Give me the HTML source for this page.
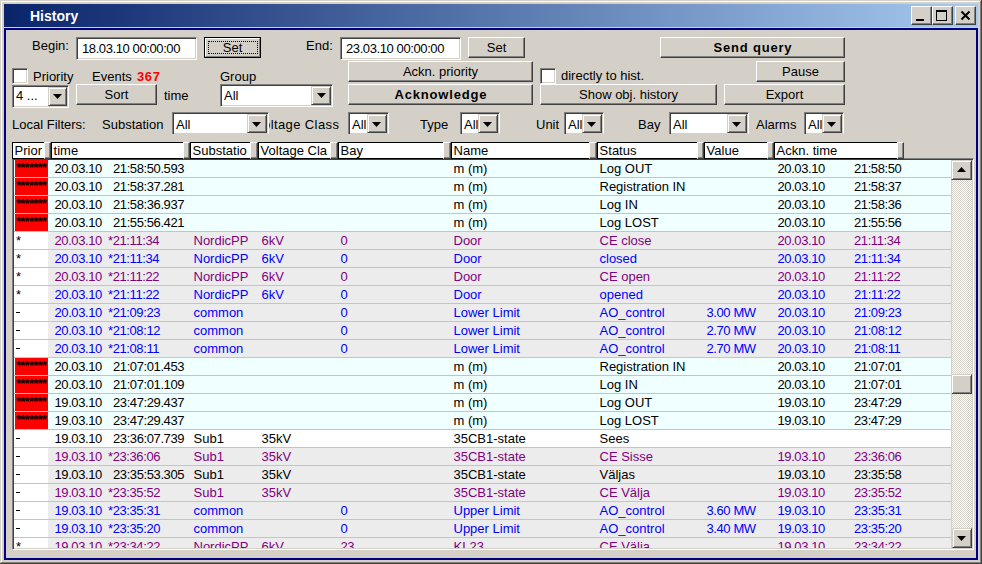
<!DOCTYPE html><html><head><meta charset="utf-8"><style>
*{margin:0;padding:0;box-sizing:border-box}
html,body{width:982px;height:564px;overflow:hidden;background:#d4d0c8;font-family:"Liberation Sans",sans-serif;font-size:13px;color:#000}
.a{position:absolute}
.t{position:absolute;white-space:nowrap;line-height:13px;font-size:13px}
.btn{position:absolute;background:#d4d0c8;border:1px solid;border-color:#fff #404040 #404040 #fff;box-shadow:inset -1px -1px #808080}
.btn2{position:absolute;background:#d4d0c8;border:1px solid;border-color:#d4d0c8 #404040 #404040 #d4d0c8;box-shadow:inset 1px 1px #fff,inset -1px -1px #808080}
.edit{position:absolute;background:#fff;border:1px solid;border-color:#808080 #fff #fff #808080;box-shadow:inset 1px 1px #404040,inset -1px -1px #d4d0c8}
.n{letter-spacing:-0.4px}
</style></head><body><div class="a" style="left:0px;top:0px;width:982px;height:564px;background:#d4d0c8"></div>
<div class="a" style="left:1px;top:1px;width:980px;height:1px;background:#fff"></div>
<div class="a" style="left:1px;top:1px;width:1px;height:562px;background:#fff"></div>
<div class="a" style="left:980px;top:1px;width:1px;height:562px;background:#808080"></div>
<div class="a" style="left:1px;top:562px;width:980px;height:1px;background:#808080"></div>
<div class="a" style="left:981px;top:0px;width:1px;height:564px;background:#404040"></div>
<div class="a" style="left:0px;top:563px;width:982px;height:1px;background:#404040"></div>
<div class="a" style="left:4px;top:4px;width:974px;height:23px;background:linear-gradient(to right,#0a246a,#a6caf0)"></div>
<span class="t" style="left:30px;top:10px;font-weight:bold;font-size:14px;color:#fff">History</span>
<div class="btn2" style="left:911px;top:6px;width:21px;height:19px;border-color:#fff #404040 #404040 #fff;box-shadow:inset -1px -1px #808080"></div>
<div class="btn2" style="left:932px;top:6px;width:21px;height:19px;border-color:#fff #404040 #404040 #fff;box-shadow:inset -1px -1px #808080"></div>
<div class="btn2" style="left:955px;top:6px;width:21px;height:19px;border-color:#fff #404040 #404040 #fff;box-shadow:inset -1px -1px #808080"></div>
<div class="a" style="left:916px;top:19px;width:8px;height:2px;background:#000"></div>
<div class="a" style="left:936px;top:10px;width:11px;height:11px;border:1px solid #000;border-top-width:2px"></div>
<svg class="a" style="left:960px;top:10px" width="12" height="11" viewBox="0 0 12 11"><path d="M1.5 1.5 L9.5 9.5 M9.5 1.5 L1.5 9.5" stroke="#000" stroke-width="2" fill="none"/></svg>
<div class="a" style="left:4px;top:28px;width:974px;height:532px;border:2px solid #000080;background:#d4d0c8"></div>
<span class="t" style="left:32px;top:39px;">Begin:</span>
<div class="edit" style="left:76px;top:37px;width:121px;height:23px;"></div>
<span class="t" style="left:82px;top:42px;letter-spacing:-0.4px">18.03.10 00:00:00</span>
<div class="a" style="left:204px;top:37px;width:57px;height:21px;border:1px solid #000"></div>
<div class="btn" style="left:205px;top:38px;width:55px;height:19px;border-color:#fff #808080 #808080 #fff;box-shadow:none"></div>
<div class="a" style="left:208px;top:41px;width:50px;height:13px;border:1px dotted #000"></div>
<span class="t" style="left:205px;width:55px;text-align:center;top:41px;">Set</span>
<span class="t" style="left:306px;top:39px;">End:</span>
<div class="edit" style="left:340px;top:37px;width:121px;height:23px;"></div>
<span class="t" style="left:346px;top:42px;letter-spacing:-0.4px">23.03.10 00:00:00</span>
<div class="btn" style="left:468px;top:37px;width:57px;height:21px;"></div>
<span class="t" style="left:468px;width:57px;text-align:center;top:41px;">Set</span>
<div class="btn" style="left:660px;top:37px;width:185px;height:21px;"></div>
<span class="t" style="left:660px;width:185px;text-align:center;top:41px;font-weight:bold;letter-spacing:0.8px;text-indent:0.8px">Send query</span>
<div class="edit" style="left:12px;top:68px;width:16px;height:16px;"></div>
<span class="t" style="left:33px;top:70px;">Priority</span>
<span class="t" style="left:92px;top:70px;">Events</span>
<span class="t" style="left:137px;top:70px;font-weight:bold;color:#ff0000;letter-spacing:0.6px">367</span>
<span class="t" style="left:220px;top:70px;">Group</span>
<div class="btn" style="left:348px;top:61px;width:185px;height:21px;"></div>
<span class="t" style="left:348px;width:185px;text-align:center;top:65px;">Ackn. priority</span>
<div class="edit" style="left:540px;top:68px;width:16px;height:16px;"></div>
<span class="t" style="left:561px;top:69px;">directly to hist.</span>
<div class="btn" style="left:756px;top:61px;width:89px;height:21px;"></div>
<span class="t" style="left:756px;width:89px;text-align:center;top:65px;">Pause</span>
<div class="edit" style="left:12px;top:85px;width:57px;height:23px;"></div>
<div class="btn2" style="left:48px;top:87px;width:19px;height:19px;"></div>
<svg class="a" style="left:53.0px;top:94px" width="9" height="5" viewBox="0 0 9 5"><polygon points="0,0 9,0 4.5,5" fill="#000"/></svg>
<span class="t" style="left:16px;top:89px;">4 ...</span>
<div class="btn" style="left:76px;top:84px;width:81px;height:21px;"></div>
<span class="t" style="left:76px;width:81px;text-align:center;top:88px;">Sort</span>
<span class="t" style="left:164px;top:89px;">time</span>
<div class="edit" style="left:220px;top:84px;width:113px;height:23px;"></div>
<div class="btn2" style="left:311px;top:86px;width:20px;height:19px;"></div>
<svg class="a" style="left:316.5px;top:93px" width="9" height="5" viewBox="0 0 9 5"><polygon points="0,0 9,0 4.5,5" fill="#000"/></svg>
<span class="t" style="left:224px;top:89px;">All</span>
<div class="btn" style="left:348px;top:84px;width:185px;height:21px;"></div>
<span class="t" style="left:348px;width:185px;text-align:center;top:88px;font-weight:bold;letter-spacing:0.8px;text-indent:0.8px">Acknowledge</span>
<div class="btn" style="left:540px;top:84px;width:177px;height:21px;"></div>
<span class="t" style="left:540px;width:177px;text-align:center;top:88px;">Show obj. history</span>
<div class="btn" style="left:724px;top:84px;width:121px;height:21px;"></div>
<span class="t" style="left:724px;width:121px;text-align:center;top:88px;">Export</span>
<span class="t" style="left:12px;top:118px;">Local Filters:</span>
<span class="t" style="left:102px;top:118px;">Substation</span>
<span class="t" style="left:263px;top:118px;letter-spacing:0.4px">oltage Class</span>
<div class="a" style="left:172px;top:112px;width:97px;height:22px;overflow:hidden">
<div class="edit" style="left:0;top:0;width:97px;height:23px"></div>
<div class="btn2" style="left:75px;top:2px;width:20px;height:19px"></div>
<svg class="a" style="left:80px;top:10px" width="9" height="5" viewBox="0 0 9 5"><polygon points="0,0 9,0 4.5,5" fill="#000"/></svg>
<span class="t" style="left:4px;top:6px">All</span>
</div>
<div class="a" style="left:348px;top:112px;width:41px;height:22px;overflow:hidden">
<div class="edit" style="left:0;top:0;width:41px;height:23px"></div>
<div class="btn2" style="left:19px;top:2px;width:20px;height:19px"></div>
<svg class="a" style="left:24px;top:10px" width="9" height="5" viewBox="0 0 9 5"><polygon points="0,0 9,0 4.5,5" fill="#000"/></svg>
<span class="t" style="left:4px;top:6px">All</span>
</div>
<span class="t" style="left:420px;top:118px;">Type</span>
<div class="a" style="left:460px;top:112px;width:40px;height:22px;overflow:hidden">
<div class="edit" style="left:0;top:0;width:40px;height:23px"></div>
<div class="btn2" style="left:18px;top:2px;width:20px;height:19px"></div>
<svg class="a" style="left:23px;top:10px" width="9" height="5" viewBox="0 0 9 5"><polygon points="0,0 9,0 4.5,5" fill="#000"/></svg>
<span class="t" style="left:4px;top:6px">All</span>
</div>
<span class="t" style="left:536px;top:118px;">Unit</span>
<div class="a" style="left:564px;top:112px;width:40px;height:22px;overflow:hidden">
<div class="edit" style="left:0;top:0;width:40px;height:23px"></div>
<div class="btn2" style="left:18px;top:2px;width:20px;height:19px"></div>
<svg class="a" style="left:23px;top:10px" width="9" height="5" viewBox="0 0 9 5"><polygon points="0,0 9,0 4.5,5" fill="#000"/></svg>
<span class="t" style="left:4px;top:6px">All</span>
</div>
<span class="t" style="left:638px;top:118px;">Bay</span>
<div class="a" style="left:669px;top:112px;width:80px;height:22px;overflow:hidden">
<div class="edit" style="left:0;top:0;width:80px;height:23px"></div>
<div class="btn2" style="left:58px;top:2px;width:20px;height:19px"></div>
<svg class="a" style="left:63px;top:10px" width="9" height="5" viewBox="0 0 9 5"><polygon points="0,0 9,0 4.5,5" fill="#000"/></svg>
<span class="t" style="left:4px;top:6px">All</span>
</div>
<span class="t" style="left:756px;top:118px;">Alarms</span>
<div class="a" style="left:804px;top:112px;width:40px;height:22px;overflow:hidden">
<div class="edit" style="left:0;top:0;width:40px;height:23px"></div>
<div class="btn2" style="left:18px;top:2px;width:20px;height:19px"></div>
<svg class="a" style="left:23px;top:10px" width="9" height="5" viewBox="0 0 9 5"><polygon points="0,0 9,0 4.5,5" fill="#000"/></svg>
<span class="t" style="left:4px;top:6px">All</span>
</div>
<div class="edit" style="left:12px;top:158px;width:962px;height:392px;"></div>
<div class="a" style="left:14px;top:160px;width:937px;height:388px;overflow:hidden">
<div class="a" style="left:0;top:0px;width:937px;height:18px;background:#f0ffff;border-bottom:1px solid #c4c4c4;color:#000">
<div class="a" style="left:1px;top:0;width:33px;height:17px;background:#f00"></div>
<span class="t" style="left:2px;top:1px;color:#000;letter-spacing:-0.75px;font-weight:bold">*******</span>
<span class="t" style="left:40.5px;top:2px;letter-spacing:-0.4px;">20.03.10</span>
<span class="t" style="left:99px;top:2px;letter-spacing:-0.4px;">21:58:50.593</span>
<span class="t" style="left:439.5px;top:2px;">m (m)</span>
<span class="t" style="left:585.5px;top:2px;">Log OUT</span>
<span class="t" style="left:763.5px;top:2px;letter-spacing:-0.4px;">20.03.10</span>
<span class="t" style="left:840px;top:2px;letter-spacing:-0.4px;">21:58:50</span>
</div>
<div class="a" style="left:0;top:18px;width:937px;height:18px;background:#f0ffff;border-bottom:1px solid #c4c4c4;color:#000">
<div class="a" style="left:1px;top:0;width:33px;height:17px;background:#f00"></div>
<span class="t" style="left:2px;top:1px;color:#000;letter-spacing:-0.75px;font-weight:bold">*******</span>
<span class="t" style="left:40.5px;top:2px;letter-spacing:-0.4px;">20.03.10</span>
<span class="t" style="left:99px;top:2px;letter-spacing:-0.4px;">21:58:37.281</span>
<span class="t" style="left:439.5px;top:2px;">m (m)</span>
<span class="t" style="left:585.5px;top:2px;">Registration IN</span>
<span class="t" style="left:763.5px;top:2px;letter-spacing:-0.4px;">20.03.10</span>
<span class="t" style="left:840px;top:2px;letter-spacing:-0.4px;">21:58:37</span>
</div>
<div class="a" style="left:0;top:36px;width:937px;height:18px;background:#f0ffff;border-bottom:1px solid #c4c4c4;color:#000">
<div class="a" style="left:1px;top:0;width:33px;height:17px;background:#f00"></div>
<span class="t" style="left:2px;top:1px;color:#000;letter-spacing:-0.75px;font-weight:bold">*******</span>
<span class="t" style="left:40.5px;top:2px;letter-spacing:-0.4px;">20.03.10</span>
<span class="t" style="left:99px;top:2px;letter-spacing:-0.4px;">21:58:36.937</span>
<span class="t" style="left:439.5px;top:2px;">m (m)</span>
<span class="t" style="left:585.5px;top:2px;">Log IN</span>
<span class="t" style="left:763.5px;top:2px;letter-spacing:-0.4px;">20.03.10</span>
<span class="t" style="left:840px;top:2px;letter-spacing:-0.4px;">21:58:36</span>
</div>
<div class="a" style="left:0;top:54px;width:937px;height:18px;background:#f0ffff;border-bottom:1px solid #c4c4c4;color:#000">
<div class="a" style="left:1px;top:0;width:33px;height:17px;background:#f00"></div>
<span class="t" style="left:2px;top:1px;color:#000;letter-spacing:-0.75px;font-weight:bold">*******</span>
<span class="t" style="left:40.5px;top:2px;letter-spacing:-0.4px;">20.03.10</span>
<span class="t" style="left:99px;top:2px;letter-spacing:-0.4px;">21:55:56.421</span>
<span class="t" style="left:439.5px;top:2px;">m (m)</span>
<span class="t" style="left:585.5px;top:2px;">Log LOST</span>
<span class="t" style="left:763.5px;top:2px;letter-spacing:-0.4px;">20.03.10</span>
<span class="t" style="left:840px;top:2px;letter-spacing:-0.4px;">21:55:56</span>
</div>
<div class="a" style="left:0;top:72px;width:937px;height:18px;background:#ececec;border-bottom:1px solid #c4c4c4;color:#800080">
<div class="a" style="left:0;top:0;width:34px;height:17px;background:#fff"></div>
<span class="t" style="left:2px;top:2px;color:#000">*</span>
<span class="t" style="left:40.5px;top:2px;letter-spacing:-0.4px;">20.03.10</span>
<span class="t" style="left:94px;top:2px;letter-spacing:-0.4px;">*21:11:34</span>
<span class="t" style="left:179.5px;top:2px;">NordicPP</span>
<span class="t" style="left:247.5px;top:2px;">6kV</span>
<span class="t" style="left:326.5px;top:2px;letter-spacing:-0.4px;">0</span>
<span class="t" style="left:439.5px;top:2px;">Door</span>
<span class="t" style="left:585.5px;top:2px;">CE close</span>
<span class="t" style="left:763.5px;top:2px;letter-spacing:-0.4px;">20.03.10</span>
<span class="t" style="left:840px;top:2px;letter-spacing:-0.4px;">21:11:34</span>
</div>
<div class="a" style="left:0;top:90px;width:937px;height:18px;background:#ececec;border-bottom:1px solid #c4c4c4;color:#0000ff">
<div class="a" style="left:0;top:0;width:34px;height:17px;background:#fff"></div>
<span class="t" style="left:2px;top:2px;color:#000">*</span>
<span class="t" style="left:40.5px;top:2px;letter-spacing:-0.4px;">20.03.10</span>
<span class="t" style="left:94px;top:2px;letter-spacing:-0.4px;">*21:11:34</span>
<span class="t" style="left:179.5px;top:2px;">NordicPP</span>
<span class="t" style="left:247.5px;top:2px;">6kV</span>
<span class="t" style="left:326.5px;top:2px;letter-spacing:-0.4px;">0</span>
<span class="t" style="left:439.5px;top:2px;">Door</span>
<span class="t" style="left:585.5px;top:2px;">closed</span>
<span class="t" style="left:763.5px;top:2px;letter-spacing:-0.4px;">20.03.10</span>
<span class="t" style="left:840px;top:2px;letter-spacing:-0.4px;">21:11:34</span>
</div>
<div class="a" style="left:0;top:108px;width:937px;height:18px;background:#ececec;border-bottom:1px solid #c4c4c4;color:#800080">
<div class="a" style="left:0;top:0;width:34px;height:17px;background:#fff"></div>
<span class="t" style="left:2px;top:2px;color:#000">*</span>
<span class="t" style="left:40.5px;top:2px;letter-spacing:-0.4px;">20.03.10</span>
<span class="t" style="left:94px;top:2px;letter-spacing:-0.4px;">*21:11:22</span>
<span class="t" style="left:179.5px;top:2px;">NordicPP</span>
<span class="t" style="left:247.5px;top:2px;">6kV</span>
<span class="t" style="left:326.5px;top:2px;letter-spacing:-0.4px;">0</span>
<span class="t" style="left:439.5px;top:2px;">Door</span>
<span class="t" style="left:585.5px;top:2px;">CE open</span>
<span class="t" style="left:763.5px;top:2px;letter-spacing:-0.4px;">20.03.10</span>
<span class="t" style="left:840px;top:2px;letter-spacing:-0.4px;">21:11:22</span>
</div>
<div class="a" style="left:0;top:126px;width:937px;height:18px;background:#ececec;border-bottom:1px solid #c4c4c4;color:#0000ff">
<div class="a" style="left:0;top:0;width:34px;height:17px;background:#fff"></div>
<span class="t" style="left:2px;top:2px;color:#000">*</span>
<span class="t" style="left:40.5px;top:2px;letter-spacing:-0.4px;">20.03.10</span>
<span class="t" style="left:94px;top:2px;letter-spacing:-0.4px;">*21:11:22</span>
<span class="t" style="left:179.5px;top:2px;">NordicPP</span>
<span class="t" style="left:247.5px;top:2px;">6kV</span>
<span class="t" style="left:326.5px;top:2px;letter-spacing:-0.4px;">0</span>
<span class="t" style="left:439.5px;top:2px;">Door</span>
<span class="t" style="left:585.5px;top:2px;">opened</span>
<span class="t" style="left:763.5px;top:2px;letter-spacing:-0.4px;">20.03.10</span>
<span class="t" style="left:840px;top:2px;letter-spacing:-0.4px;">21:11:22</span>
</div>
<div class="a" style="left:0;top:144px;width:937px;height:18px;background:#ececec;border-bottom:1px solid #c4c4c4;color:#0000ff">
<div class="a" style="left:0;top:0;width:34px;height:17px;background:#fff"></div>
<div class="a" style="left:2px;top:8px;width:4px;height:1px;background:#000"></div>
<span class="t" style="left:40.5px;top:2px;letter-spacing:-0.4px;">20.03.10</span>
<span class="t" style="left:94px;top:2px;letter-spacing:-0.4px;">*21:09:23</span>
<span class="t" style="left:179.5px;top:2px;">common</span>
<span class="t" style="left:326.5px;top:2px;letter-spacing:-0.4px;">0</span>
<span class="t" style="left:439.5px;top:2px;">Lower Limit</span>
<span class="t" style="left:585.5px;top:2px;">AO_control</span>
<span class="t" style="left:692.5px;top:2px;letter-spacing:-0.4px;">3.00 MW</span>
<span class="t" style="left:763.5px;top:2px;letter-spacing:-0.4px;">20.03.10</span>
<span class="t" style="left:840px;top:2px;letter-spacing:-0.4px;">21:09:23</span>
</div>
<div class="a" style="left:0;top:162px;width:937px;height:18px;background:#ececec;border-bottom:1px solid #c4c4c4;color:#0000ff">
<div class="a" style="left:0;top:0;width:34px;height:17px;background:#fff"></div>
<div class="a" style="left:2px;top:8px;width:4px;height:1px;background:#000"></div>
<span class="t" style="left:40.5px;top:2px;letter-spacing:-0.4px;">20.03.10</span>
<span class="t" style="left:94px;top:2px;letter-spacing:-0.4px;">*21:08:12</span>
<span class="t" style="left:179.5px;top:2px;">common</span>
<span class="t" style="left:326.5px;top:2px;letter-spacing:-0.4px;">0</span>
<span class="t" style="left:439.5px;top:2px;">Lower Limit</span>
<span class="t" style="left:585.5px;top:2px;">AO_control</span>
<span class="t" style="left:692.5px;top:2px;letter-spacing:-0.4px;">2.70 MW</span>
<span class="t" style="left:763.5px;top:2px;letter-spacing:-0.4px;">20.03.10</span>
<span class="t" style="left:840px;top:2px;letter-spacing:-0.4px;">21:08:12</span>
</div>
<div class="a" style="left:0;top:180px;width:937px;height:18px;background:#ececec;border-bottom:1px solid #c4c4c4;color:#0000ff">
<div class="a" style="left:0;top:0;width:34px;height:17px;background:#fff"></div>
<div class="a" style="left:2px;top:8px;width:4px;height:1px;background:#000"></div>
<span class="t" style="left:40.5px;top:2px;letter-spacing:-0.4px;">20.03.10</span>
<span class="t" style="left:94px;top:2px;letter-spacing:-0.4px;">*21:08:11</span>
<span class="t" style="left:179.5px;top:2px;">common</span>
<span class="t" style="left:326.5px;top:2px;letter-spacing:-0.4px;">0</span>
<span class="t" style="left:439.5px;top:2px;">Lower Limit</span>
<span class="t" style="left:585.5px;top:2px;">AO_control</span>
<span class="t" style="left:692.5px;top:2px;letter-spacing:-0.4px;">2.70 MW</span>
<span class="t" style="left:763.5px;top:2px;letter-spacing:-0.4px;">20.03.10</span>
<span class="t" style="left:840px;top:2px;letter-spacing:-0.4px;">21:08:11</span>
</div>
<div class="a" style="left:0;top:198px;width:937px;height:18px;background:#f0ffff;border-bottom:1px solid #c4c4c4;color:#000">
<div class="a" style="left:1px;top:0;width:33px;height:17px;background:#f00"></div>
<span class="t" style="left:2px;top:1px;color:#000;letter-spacing:-0.75px;font-weight:bold">*******</span>
<span class="t" style="left:40.5px;top:2px;letter-spacing:-0.4px;">20.03.10</span>
<span class="t" style="left:99px;top:2px;letter-spacing:-0.4px;">21:07:01.453</span>
<span class="t" style="left:439.5px;top:2px;">m (m)</span>
<span class="t" style="left:585.5px;top:2px;">Registration IN</span>
<span class="t" style="left:763.5px;top:2px;letter-spacing:-0.4px;">20.03.10</span>
<span class="t" style="left:840px;top:2px;letter-spacing:-0.4px;">21:07:01</span>
</div>
<div class="a" style="left:0;top:216px;width:937px;height:18px;background:#f0ffff;border-bottom:1px solid #c4c4c4;color:#000">
<div class="a" style="left:1px;top:0;width:33px;height:17px;background:#f00"></div>
<span class="t" style="left:2px;top:1px;color:#000;letter-spacing:-0.75px;font-weight:bold">*******</span>
<span class="t" style="left:40.5px;top:2px;letter-spacing:-0.4px;">20.03.10</span>
<span class="t" style="left:99px;top:2px;letter-spacing:-0.4px;">21:07:01.109</span>
<span class="t" style="left:439.5px;top:2px;">m (m)</span>
<span class="t" style="left:585.5px;top:2px;">Log IN</span>
<span class="t" style="left:763.5px;top:2px;letter-spacing:-0.4px;">20.03.10</span>
<span class="t" style="left:840px;top:2px;letter-spacing:-0.4px;">21:07:01</span>
</div>
<div class="a" style="left:0;top:234px;width:937px;height:18px;background:#f0ffff;border-bottom:1px solid #c4c4c4;color:#000">
<div class="a" style="left:1px;top:0;width:33px;height:17px;background:#f00"></div>
<span class="t" style="left:2px;top:1px;color:#000;letter-spacing:-0.75px;font-weight:bold">*******</span>
<span class="t" style="left:40.5px;top:2px;letter-spacing:-0.4px;">19.03.10</span>
<span class="t" style="left:99px;top:2px;letter-spacing:-0.4px;">23:47:29.437</span>
<span class="t" style="left:439.5px;top:2px;">m (m)</span>
<span class="t" style="left:585.5px;top:2px;">Log OUT</span>
<span class="t" style="left:763.5px;top:2px;letter-spacing:-0.4px;">19.03.10</span>
<span class="t" style="left:840px;top:2px;letter-spacing:-0.4px;">23:47:29</span>
</div>
<div class="a" style="left:0;top:252px;width:937px;height:18px;background:#f0ffff;border-bottom:1px solid #c4c4c4;color:#000">
<div class="a" style="left:1px;top:0;width:33px;height:17px;background:#f00"></div>
<span class="t" style="left:2px;top:1px;color:#000;letter-spacing:-0.75px;font-weight:bold">*******</span>
<span class="t" style="left:40.5px;top:2px;letter-spacing:-0.4px;">19.03.10</span>
<span class="t" style="left:99px;top:2px;letter-spacing:-0.4px;">23:47:29.437</span>
<span class="t" style="left:439.5px;top:2px;">m (m)</span>
<span class="t" style="left:585.5px;top:2px;">Log LOST</span>
<span class="t" style="left:763.5px;top:2px;letter-spacing:-0.4px;">19.03.10</span>
<span class="t" style="left:840px;top:2px;letter-spacing:-0.4px;">23:47:29</span>
</div>
<div class="a" style="left:0;top:270px;width:937px;height:18px;background:#fff;border-bottom:1px solid #c4c4c4;color:#000">
<div class="a" style="left:0;top:0;width:34px;height:17px;background:#fff"></div>
<div class="a" style="left:2px;top:8px;width:4px;height:1px;background:#000"></div>
<span class="t" style="left:40.5px;top:2px;letter-spacing:-0.4px;">19.03.10</span>
<span class="t" style="left:99px;top:2px;letter-spacing:-0.4px;">23:36:07.739</span>
<span class="t" style="left:179.5px;top:2px;">Sub1</span>
<span class="t" style="left:247.5px;top:2px;">35kV</span>
<span class="t" style="left:439.5px;top:2px;">35CB1-state</span>
<span class="t" style="left:585.5px;top:2px;">Sees</span>
</div>
<div class="a" style="left:0;top:288px;width:937px;height:18px;background:#ececec;border-bottom:1px solid #c4c4c4;color:#800080">
<div class="a" style="left:0;top:0;width:34px;height:17px;background:#fff"></div>
<div class="a" style="left:2px;top:8px;width:4px;height:1px;background:#000"></div>
<span class="t" style="left:40.5px;top:2px;letter-spacing:-0.4px;">19.03.10</span>
<span class="t" style="left:94px;top:2px;letter-spacing:-0.4px;">*23:36:06</span>
<span class="t" style="left:179.5px;top:2px;">Sub1</span>
<span class="t" style="left:247.5px;top:2px;">35kV</span>
<span class="t" style="left:439.5px;top:2px;">35CB1-state</span>
<span class="t" style="left:585.5px;top:2px;">CE Sisse</span>
<span class="t" style="left:763.5px;top:2px;letter-spacing:-0.4px;">19.03.10</span>
<span class="t" style="left:840px;top:2px;letter-spacing:-0.4px;">23:36:06</span>
</div>
<div class="a" style="left:0;top:306px;width:937px;height:18px;background:#ececec;border-bottom:1px solid #c4c4c4;color:#000">
<div class="a" style="left:0;top:0;width:34px;height:17px;background:#fff"></div>
<div class="a" style="left:2px;top:8px;width:4px;height:1px;background:#000"></div>
<span class="t" style="left:40.5px;top:2px;letter-spacing:-0.4px;">19.03.10</span>
<span class="t" style="left:99px;top:2px;letter-spacing:-0.4px;">23:35:53.305</span>
<span class="t" style="left:179.5px;top:2px;">Sub1</span>
<span class="t" style="left:247.5px;top:2px;">35kV</span>
<span class="t" style="left:439.5px;top:2px;">35CB1-state</span>
<span class="t" style="left:585.5px;top:2px;">V&auml;ljas</span>
<span class="t" style="left:763.5px;top:2px;letter-spacing:-0.4px;">19.03.10</span>
<span class="t" style="left:840px;top:2px;letter-spacing:-0.4px;">23:35:58</span>
</div>
<div class="a" style="left:0;top:324px;width:937px;height:18px;background:#ececec;border-bottom:1px solid #c4c4c4;color:#800080">
<div class="a" style="left:0;top:0;width:34px;height:17px;background:#fff"></div>
<div class="a" style="left:2px;top:8px;width:4px;height:1px;background:#000"></div>
<span class="t" style="left:40.5px;top:2px;letter-spacing:-0.4px;">19.03.10</span>
<span class="t" style="left:94px;top:2px;letter-spacing:-0.4px;">*23:35:52</span>
<span class="t" style="left:179.5px;top:2px;">Sub1</span>
<span class="t" style="left:247.5px;top:2px;">35kV</span>
<span class="t" style="left:439.5px;top:2px;">35CB1-state</span>
<span class="t" style="left:585.5px;top:2px;">CE V&auml;lja</span>
<span class="t" style="left:763.5px;top:2px;letter-spacing:-0.4px;">19.03.10</span>
<span class="t" style="left:840px;top:2px;letter-spacing:-0.4px;">23:35:52</span>
</div>
<div class="a" style="left:0;top:342px;width:937px;height:18px;background:#ececec;border-bottom:1px solid #c4c4c4;color:#0000ff">
<div class="a" style="left:0;top:0;width:34px;height:17px;background:#fff"></div>
<div class="a" style="left:2px;top:8px;width:4px;height:1px;background:#000"></div>
<span class="t" style="left:40.5px;top:2px;letter-spacing:-0.4px;">19.03.10</span>
<span class="t" style="left:94px;top:2px;letter-spacing:-0.4px;">*23:35:31</span>
<span class="t" style="left:179.5px;top:2px;">common</span>
<span class="t" style="left:326.5px;top:2px;letter-spacing:-0.4px;">0</span>
<span class="t" style="left:439.5px;top:2px;">Upper Limit</span>
<span class="t" style="left:585.5px;top:2px;">AO_control</span>
<span class="t" style="left:692.5px;top:2px;letter-spacing:-0.4px;">3.60 MW</span>
<span class="t" style="left:763.5px;top:2px;letter-spacing:-0.4px;">19.03.10</span>
<span class="t" style="left:840px;top:2px;letter-spacing:-0.4px;">23:35:31</span>
</div>
<div class="a" style="left:0;top:360px;width:937px;height:18px;background:#ececec;border-bottom:1px solid #c4c4c4;color:#0000ff">
<div class="a" style="left:0;top:0;width:34px;height:17px;background:#fff"></div>
<div class="a" style="left:2px;top:8px;width:4px;height:1px;background:#000"></div>
<span class="t" style="left:40.5px;top:2px;letter-spacing:-0.4px;">19.03.10</span>
<span class="t" style="left:94px;top:2px;letter-spacing:-0.4px;">*23:35:20</span>
<span class="t" style="left:179.5px;top:2px;">common</span>
<span class="t" style="left:326.5px;top:2px;letter-spacing:-0.4px;">0</span>
<span class="t" style="left:439.5px;top:2px;">Upper Limit</span>
<span class="t" style="left:585.5px;top:2px;">AO_control</span>
<span class="t" style="left:692.5px;top:2px;letter-spacing:-0.4px;">3.40 MW</span>
<span class="t" style="left:763.5px;top:2px;letter-spacing:-0.4px;">19.03.10</span>
<span class="t" style="left:840px;top:2px;letter-spacing:-0.4px;">23:35:20</span>
</div>
<div class="a" style="left:0;top:378px;width:937px;height:18px;background:#ececec;border-bottom:1px solid #c4c4c4;color:#800080">
<div class="a" style="left:0;top:0;width:34px;height:17px;background:#fff"></div>
<span class="t" style="left:2px;top:2px;color:#000">*</span>
<span class="t" style="left:40.5px;top:2px;letter-spacing:-0.4px;">19.03.10</span>
<span class="t" style="left:94px;top:2px;letter-spacing:-0.4px;">*23:34:22</span>
<span class="t" style="left:179.5px;top:2px;">NordicPP</span>
<span class="t" style="left:247.5px;top:2px;">6kV</span>
<span class="t" style="left:326.5px;top:2px;letter-spacing:-0.4px;">23</span>
<span class="t" style="left:439.5px;top:2px;">KL23</span>
<span class="t" style="left:585.5px;top:2px;">CE V&auml;lja</span>
<span class="t" style="left:763.5px;top:2px;letter-spacing:-0.4px;">19.03.10</span>
<span class="t" style="left:840px;top:2px;letter-spacing:-0.4px;">23:34:22</span>
</div>
</div>
<svg class="a" style="left:951px;top:180px" width="21" height="348"><defs><pattern id="ck" width="2" height="2" patternUnits="userSpaceOnUse"><rect width="2" height="2" fill="#d4d0c8"/><rect x="0" y="0" width="1" height="1" fill="#fff"/><rect x="1" y="1" width="1" height="1" fill="#fff"/></pattern></defs><rect width="21" height="348" fill="url(#ck)"/></svg>
<div class="btn2" style="left:951px;top:160px;width:21px;height:20px;"></div>
<svg class="a" style="left:957.0px;top:167px" width="9" height="5" viewBox="0 0 9 5"><polygon points="0,5 9,5 4.5,0" fill="#000"/></svg>
<div class="btn2" style="left:951px;top:374px;width:21px;height:20px;"></div>
<div class="btn2" style="left:952px;top:528px;width:20px;height:20px;"></div>
<svg class="a" style="left:957.0px;top:536px" width="9" height="5" viewBox="0 0 9 5"><polygon points="0,0 9,0 4.5,5" fill="#000"/></svg>
<div class="a" style="left:951px;top:180px;width:1px;height:368px;background:#d4d0c8"></div>
<div class="a" style="left:12px;top:142px;width:32px;height:17px;background:#fff;border:1px solid #000;border-right:none;overflow:hidden"><span class="t" style="left:1.6px;top:1px">Prior</span></div>
<div class="btn" style="left:44px;top:142px;width:7px;height:17px;"></div>
<div class="a" style="left:51px;top:142px;width:132px;height:17px;background:#fff;border:1px solid #000;border-right:none;overflow:hidden"><span class="t" style="left:1.6px;top:1px">time</span></div>
<div class="btn" style="left:183px;top:142px;width:7px;height:17px;"></div>
<div class="a" style="left:190px;top:142px;width:60px;height:17px;background:#fff;border:1px solid #000;border-right:none;overflow:hidden"><span class="t" style="left:1.6px;top:1px">Substatio</span></div>
<div class="btn" style="left:250px;top:142px;width:8px;height:17px;"></div>
<div class="a" style="left:258px;top:142px;width:72px;height:17px;background:#fff;border:1px solid #000;border-right:none;overflow:hidden"><span class="t" style="left:1.6px;top:1px">Voltage Cla</span></div>
<div class="btn" style="left:330px;top:142px;width:8px;height:17px;"></div>
<div class="a" style="left:338px;top:142px;width:105px;height:17px;background:#fff;border:1px solid #000;border-right:none;overflow:hidden"><span class="t" style="left:1.6px;top:1px">Bay</span></div>
<div class="btn" style="left:443px;top:142px;width:8px;height:17px;"></div>
<div class="a" style="left:451px;top:142px;width:138px;height:17px;background:#fff;border:1px solid #000;border-right:none;overflow:hidden"><span class="t" style="left:1.6px;top:1px">Name</span></div>
<div class="btn" style="left:589px;top:142px;width:8px;height:17px;"></div>
<div class="a" style="left:597px;top:142px;width:100px;height:17px;background:#fff;border:1px solid #000;border-right:none;overflow:hidden"><span class="t" style="left:1.6px;top:1px">Status</span></div>
<div class="btn" style="left:697px;top:142px;width:7px;height:17px;"></div>
<div class="a" style="left:704px;top:142px;width:63px;height:17px;background:#fff;border:1px solid #000;border-right:none;overflow:hidden"><span class="t" style="left:1.6px;top:1px">Value</span></div>
<div class="btn" style="left:767px;top:142px;width:7px;height:17px;"></div>
<div class="a" style="left:774px;top:142px;width:123px;height:17px;background:#fff;border:1px solid #000;border-right:none;overflow:hidden"><span class="t" style="left:1.6px;top:1px">Ackn. time</span></div>
<div class="btn" style="left:897px;top:142px;width:7px;height:17px;"></div></body></html>
